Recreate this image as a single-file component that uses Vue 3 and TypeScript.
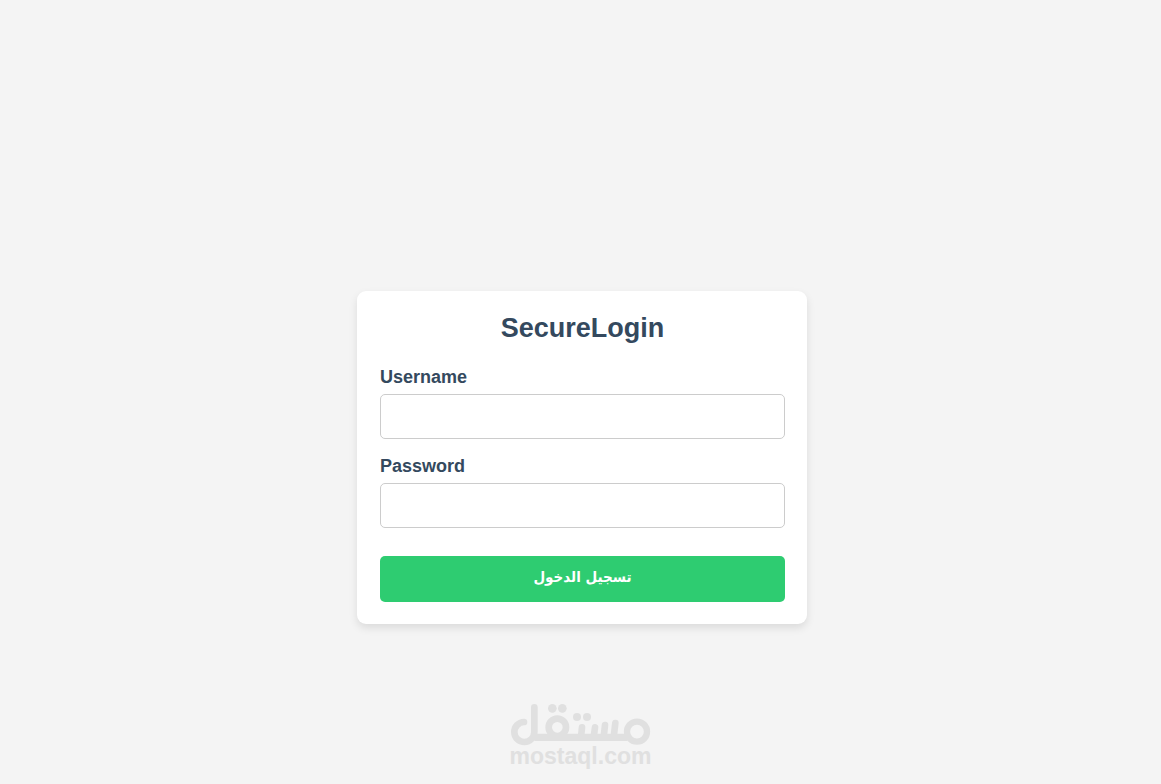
<script setup lang="ts">
import { ref } from 'vue'

const username = ref<string>('')
const password = ref<string>('')
</script>

<template>
  <div class="page">
    <main class="card">
      <h1 class="title">SecureLogin</h1>
      <form @submit.prevent>
        <div class="field">
          <label for="username">Username</label>
          <input id="username" v-model="username" type="text" autocomplete="username" />
        </div>
        <div class="field">
          <label for="password">Password</label>
          <input id="password" v-model="password" type="password" autocomplete="current-password" />
        </div>
        <button class="submit" type="submit" lang="ar" dir="rtl">تسجيل الدخول</button>
      </form>
    </main>

    <footer class="brand">
      <svg class="mark" viewBox="30 24 423 129" aria-hidden="true">
        <g fill="none" stroke="currentColor" stroke-width="20" stroke-linecap="round" stroke-linejoin="round">
          <path d="M72 81A30 30 0 1 0 103 111V37" />
          <path d="M103 127H382" stroke-width="22" stroke-linecap="butt" />
          <circle cx="172" cy="97" r="26" />
          <circle cx="411" cy="110" r="30" stroke-width="19" />
          <path d="M243 127L246 97M281 127L285 97M311 127L315 90M341 127L346 84" />
        </g>
        <g fill="currentColor">
          <circle cx="157" cy="40" r="13" />
          <circle cx="187" cy="40" r="13" />
          <circle cx="231" cy="66" r="12" />
          <circle cx="261" cy="66" r="12" />
        </g>
      </svg>
      <span class="domain">mostaql.com</span>
    </footer>
  </div>
</template>

<style>
body {
  background: #f4f4f4;
}
</style>

<style scoped>
.page {
  box-sizing: border-box;
  min-height: 100vh;
  padding: 291px 0 18px;
  display: flex;
  flex-direction: column;
  align-items: center;
  justify-content: space-between;
  font-family: "Liberation Sans", Arial, sans-serif;
  color: #34495e;
}

.card {
  box-sizing: border-box;
  width: 100%;
  max-width: 450px;
  margin-left: 3px;
  padding: 21px 22px 22px 23px;
  background: #fff;
  border-radius: 9px;
  box-shadow: 0 4px 9px rgba(0, 0, 0, 0.1);
}

.title {
  margin: 0 0 22px;
  font-size: 27px;
  line-height: 32px;
  text-align: center;
}

.field {
  margin-bottom: 16px;
}

label {
  display: block;
  margin-bottom: 6px;
  font-size: 18px;
  font-weight: bold;
  line-height: 22px;
}

input {
  display: block;
  box-sizing: border-box;
  width: 100%;
  height: 45px;
  padding: 0 11px;
  border: 1px solid #ccc;
  border-radius: 5px;
  background: #fff;
  font: inherit;
  font-size: 18px;
  color: inherit;
}

.submit {
  display: block;
  width: 100%;
  height: 46px;
  margin-top: 28px;
  padding: 0 0 4px;
  border: 0;
  border-radius: 5px;
  background: #2ecc71;
  color: #fff;
  font-family: "DejaVu Sans Condensed", "DejaVu Sans", sans-serif;
  font-size: 15px;
  font-weight: bold;
  cursor: pointer;
}

.brand {
  display: flex;
  flex-direction: column;
  align-items: center;
  color: #e0e0e0;
}

.mark {
  display: block;
  width: 141px;
  height: 43px;
}

.domain {
  font-size: 23px;
  font-weight: bold;
  line-height: 20px;
}
</style>
